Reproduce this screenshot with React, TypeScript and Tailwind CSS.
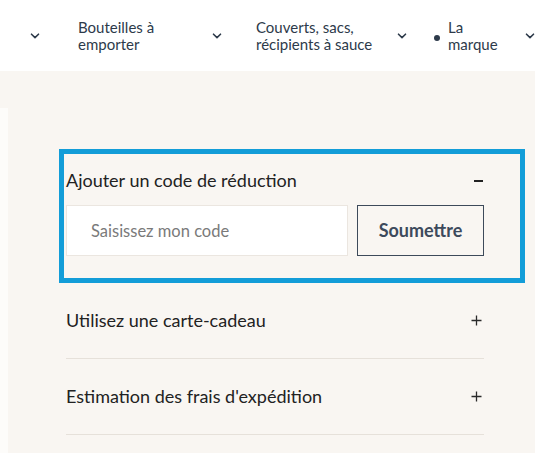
const Chevron = () => (
  <svg width="10" height="6" viewBox="0 0 10 6" fill="none" className="shrink-0">
    <path d="M1.5 1.2 5 4.6 8.5 1.2" stroke="#2d3a4a" strokeWidth="1.6" strokeLinecap="round" strokeLinejoin="round" />
  </svg>
);

const Plus = () => (
  <svg width="11" height="11" viewBox="0 0 11 11" className="mr-[2px] shrink-0">
    <path d="M5.5 0.5v10M0.5 5.5h10" stroke="#2a2a2a" strokeWidth="1.3" />
  </svg>
);

const font = { fontFamily: '"Lato", "Noto Sans", sans-serif' };

const Row = ({ label }: { label: string }) => (
  <div className="border-b border-[#e6e1da]">
    <div className="flex h-[75px] items-center justify-between">
      <span className="text-[18px] text-[#222222]">{label}</span>
      <Plus />
    </div>
  </div>
);

export default function App() {
  return (
    <div className="h-[453px] w-[535px] overflow-hidden bg-[#f9f6f2]" style={font}>
      <nav className="flex h-[71px] items-center bg-white text-[15px] leading-[17px] text-[#2d3a4a]">
        <div className="ml-[30px] w-[10px]">
          <Chevron />
        </div>
        <div className="ml-[38px] w-[134px] whitespace-nowrap">
          Bouteilles à<br />emporter
        </div>
        <Chevron />
        <div className="ml-[34px] w-[141px] whitespace-nowrap">
          Couverts, sacs,<br />récipients à sauce
        </div>
        <Chevron />
        <span className="ml-[27px] mt-[4px] h-[6px] w-[6px] shrink-0 rounded-full bg-[#2d3a4a]" />
        <div className="ml-[8px] w-[77px]">
          La<br />marque
        </div>
        <Chevron />
      </nav>

      <div className="h-[37px]" />

      <div className="flex">
        <div className="h-[345px] w-[8px] bg-[#fdfcfa]" />
        <div className="flex-1 pl-[51px] pr-[10px] pt-[41px]">
          <div className="border-[5px] border-[#139dd8] pb-[22px] pl-[2px] pr-[36px]">
            <div className="flex h-[51px] items-center justify-between pt-[2px]">
              <span className="text-[18px] text-[#222222]">Ajouter un code de réduction</span>
              <span className="mr-[1px] h-[2px] w-[9px] bg-[#222222]" />
            </div>
            <div className="flex gap-[9px]">
              <input
                className="h-[51px] w-[282px] border border-[#ebe6e0] bg-white pl-[24px] text-[16.5px] text-[#333] outline-none placeholder:text-[#7a7a7a]"
                placeholder="Saisissez mon code"
                style={font}
              />
              <button className="h-[51px] flex-1 border border-[#3d4a5a] text-[18px] font-bold text-[#3d4a5c]">
                Soumettre
              </button>
            </div>
          </div>
          <div className="pl-[7px] pr-[41px]">
            <Row label="Utilisez une carte-cadeau" />
            <Row label="Estimation des frais d'expédition" />
          </div>
        </div>
      </div>
    </div>
  );
}
